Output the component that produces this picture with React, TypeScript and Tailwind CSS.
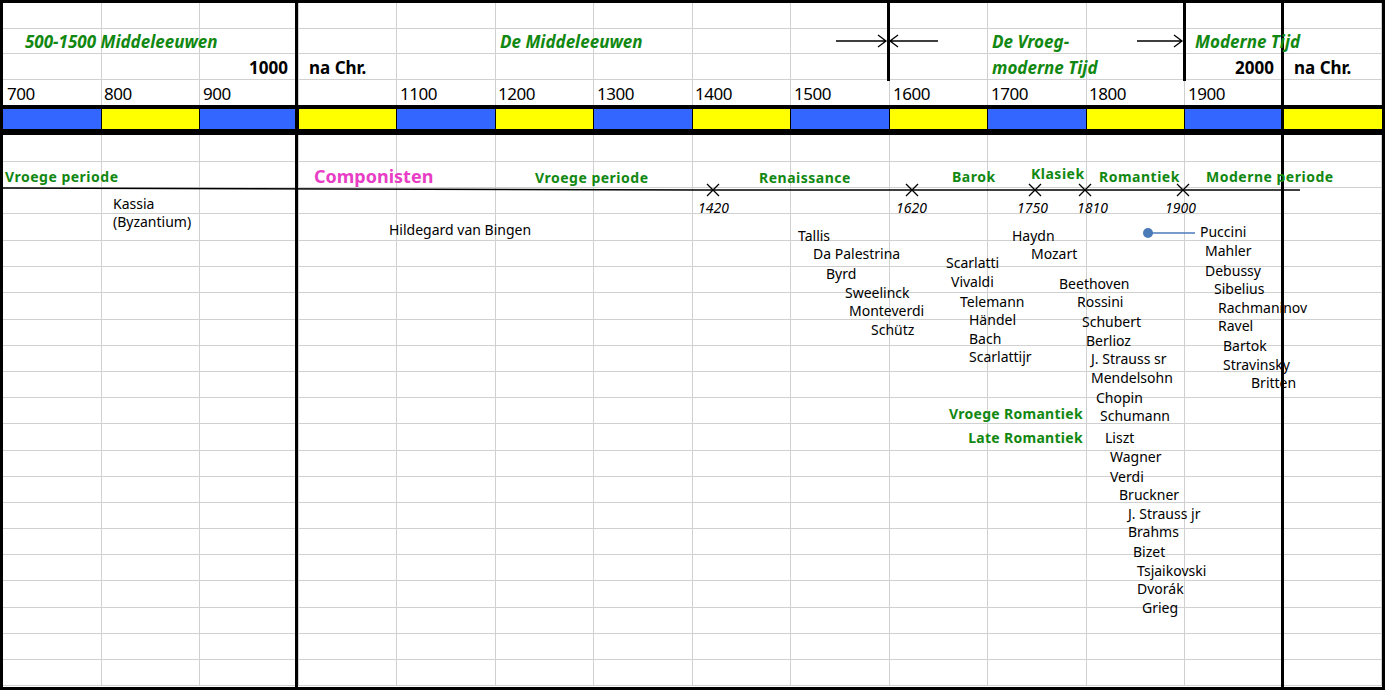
import React from 'react';

const rowHeights = [26, 25, 26, 26, 26, 30, 26, 26, 27, ...Array(17).fill(26.2)];
const cols = Array.from({ length: 14 });

const names: [string, number, number][] = [
  ['Kassia', 113, 204], ['(Byzantium)', 113, 222], ['Hildegard van Bingen', 389, 230],
  ['Tallis', 798, 236], ['Da Palestrina', 813, 254], ['Byrd', 826, 274], ['Sweelinck', 845, 293],
  ['Monteverdi', 849, 311], ['Schütz', 871, 330], ['Scarlatti', 946, 263], ['Vivaldi', 951, 282],
  ['Telemann', 960, 302], ['Händel', 969, 320], ['Bach', 969, 339], ['Scarlattijr', 969, 357],
  ['Haydn', 1012, 236], ['Mozart', 1031, 254], ['Beethoven', 1059, 284], ['Rossini', 1077, 302],
  ['Schubert', 1082, 322], ['Berlioz', 1086, 341], ['J. Strauss sr', 1091, 359], ['Mendelsohn', 1091, 378],
  ['Chopin', 1096, 398], ['Schumann', 1100, 416], ['Liszt', 1105, 438], ['Wagner', 1110, 457],
  ['Verdi', 1110, 477], ['Bruckner', 1119, 495], ['J. Strauss jr', 1128, 514], ['Brahms', 1128, 532],
  ['Bizet', 1133, 552], ['Tsjaikovski', 1137, 571], ['Dvorák', 1137, 589], ['Grieg', 1142, 608],
  ['Puccini', 1200, 232], ['Mahler', 1205, 251], ['Debussy', 1205, 271], ['Sibelius', 1214, 289],
  ['Rachmaninov', 1218, 308], ['Ravel', 1218, 326], ['Bartok', 1223, 346], ['Stravinsky', 1223, 365],
  ['Britten', 1251, 383],
];

const years: [string, number][] = [
  ['700', 7], ['800', 104], ['900', 203], ['1100', 400], ['1200', 498], ['1300', 597], ['1400', 695],
  ['1500', 794], ['1600', 893], ['1700', 991], ['1800', 1089], ['1900', 1188],
];

const periods: [string, number, number][] = [
  ['Vroege periode', 5, 177], ['Vroege periode', 535, 178], ['Renaissance', 759, 178], ['Barok', 952, 177],
  ['Klasiek', 1031, 174], ['Romantiek', 1099, 177], ['Moderne periode', 1206, 177],
];

const dates: [string, number][] = [['1420', 698], ['1620', 896], ['1750', 1017], ['1810', 1077], ['1900', 1165]];

export default function App() {
  return (
    <div className="relative w-[1385px] h-[690px] bg-white overflow-hidden font-['Liberation_Sans',Arial,sans-serif] text-black">
      {/* spreadsheet grid */}
      <div className="absolute inset-0 border-[3px] border-black flex flex-col">
        {rowHeights.map((h, r) => (
          <div key={r} className="grid grid-cols-[repeat(14,1fr)] shrink-0" style={{ height: h }}>
            {cols.map((_, c) => (
              <div
                key={c}
                className={
                  r === 4
                    ? `border-y-[3px] border-black ${c < 13 ? 'border-r' : ''} ${c % 2 === 0 ? 'bg-[#3366ff]' : 'bg-[#ffff00]'}`
                    : 'border-r border-b border-[#d0d0d0]'
                }
              />
            ))}
          </div>
        ))}
      </div>

      {/* thick vertical lines */}
      <div className="absolute left-[295px] top-0 w-[3px] h-full bg-black" />
      <div className="absolute left-[1281px] top-0 w-[3px] h-full bg-black" />
      <div className="absolute left-[887px] top-0 w-[3px] h-[81px] bg-black" />
      <div className="absolute left-[1183px] top-0 w-[3px] h-[81px] bg-black" />
      <div className="absolute left-0 top-[105px] w-full h-[4px] bg-black" />
      <div className="absolute left-0 top-[131px] w-full h-[4px] bg-black" />

      {/* headings */}
      <div className="absolute text-[17px] font-bold italic text-[#118811] leading-5">
        <span className="absolute left-[25px] top-[32px] whitespace-nowrap">500-1500 Middeleeuwen</span>
        <span className="absolute left-[500px] top-[32px] whitespace-nowrap">De Middeleeuwen</span>
        <span className="absolute left-[992px] top-[32px] whitespace-nowrap">De Vroeg-</span>
        <span className="absolute left-[992px] top-[58px] whitespace-nowrap">moderne Tijd</span>
        <span className="absolute left-[1195px] top-[32px] whitespace-nowrap">Moderne Tijd</span>
      </div>
      <div className="absolute top-[58px] left-[249px] text-[17px] font-bold leading-5">1000</div>
      <div className="absolute top-[58px] left-[309px] text-[17px] font-bold leading-5">na Chr.</div>
      <div className="absolute top-[58px] left-[1235px] text-[17px] font-bold leading-5">2000</div>
      <div className="absolute top-[58px] left-[1294px] text-[17px] font-bold leading-5">na Chr.</div>

      {/* arrows */}
      <svg className="absolute left-0 top-0" width="1385" height="690">
        <g stroke="#000" strokeWidth="1.3" fill="none">
          <path d="M836 41 H886 M878 35 L886 41 L878 47" />
          <path d="M938 41 H890 M898 35 L890 41 L898 47" />
          <path d="M1137 41 H1182 M1174 35 L1182 41 L1174 47" />
          <path d="M0 188 L700 190 L1300 190" strokeWidth="1.5" />
          {[713, 912, 1035, 1085, 1183].map(x => (
            <path key={x} d={`M${x - 6} ${184} L${x + 6} ${196} M${x + 6} ${184} L${x - 6} ${196}`} />
          ))}
          <path d="M1148 233 H1195" stroke="#4a7ab8" strokeWidth="1.5" />
        </g>
        <circle cx="1148" cy="233" r="5" fill="#4a7ab8" />
      </svg>

      {years.map(([t, x]) => (
        <span key={t} className="absolute top-[84px] text-[17px] leading-5 tracking-[-0.5px]" style={{ left: x }}>{t}</span>
      ))}

      {periods.map(([t, x, y], i) => (
        <span key={i} className="absolute text-[14px] font-bold text-[#118811] leading-[18px] tracking-[0.5px] whitespace-nowrap" style={{ left: x, top: y - 9 }}>{t}</span>
      ))}
      <span className="absolute left-[314px] top-[166px] text-[18px] font-bold text-[#e83ec5] leading-5">Componisten</span>

      {dates.map(([t, x]) => (
        <span key={t} className="absolute top-[199px] text-[14px] italic leading-[18px]" style={{ left: x }}>{t}</span>
      ))}

      {names.map(([t, x, y], i) => (
        <span key={i} className="absolute text-[14px] leading-[18px] whitespace-nowrap" style={{ left: x, top: y - 9 }}>{t}</span>
      ))}

      <span className="absolute right-[302px] top-[405px] text-[14px] font-bold text-[#118811] leading-[18px] tracking-[0.3px]">Vroege Romantiek</span>
      <span className="absolute right-[302px] top-[429px] text-[14px] font-bold text-[#118811] leading-[18px] tracking-[0.3px]">Late Romantiek</span>
    </div>
  );
}
